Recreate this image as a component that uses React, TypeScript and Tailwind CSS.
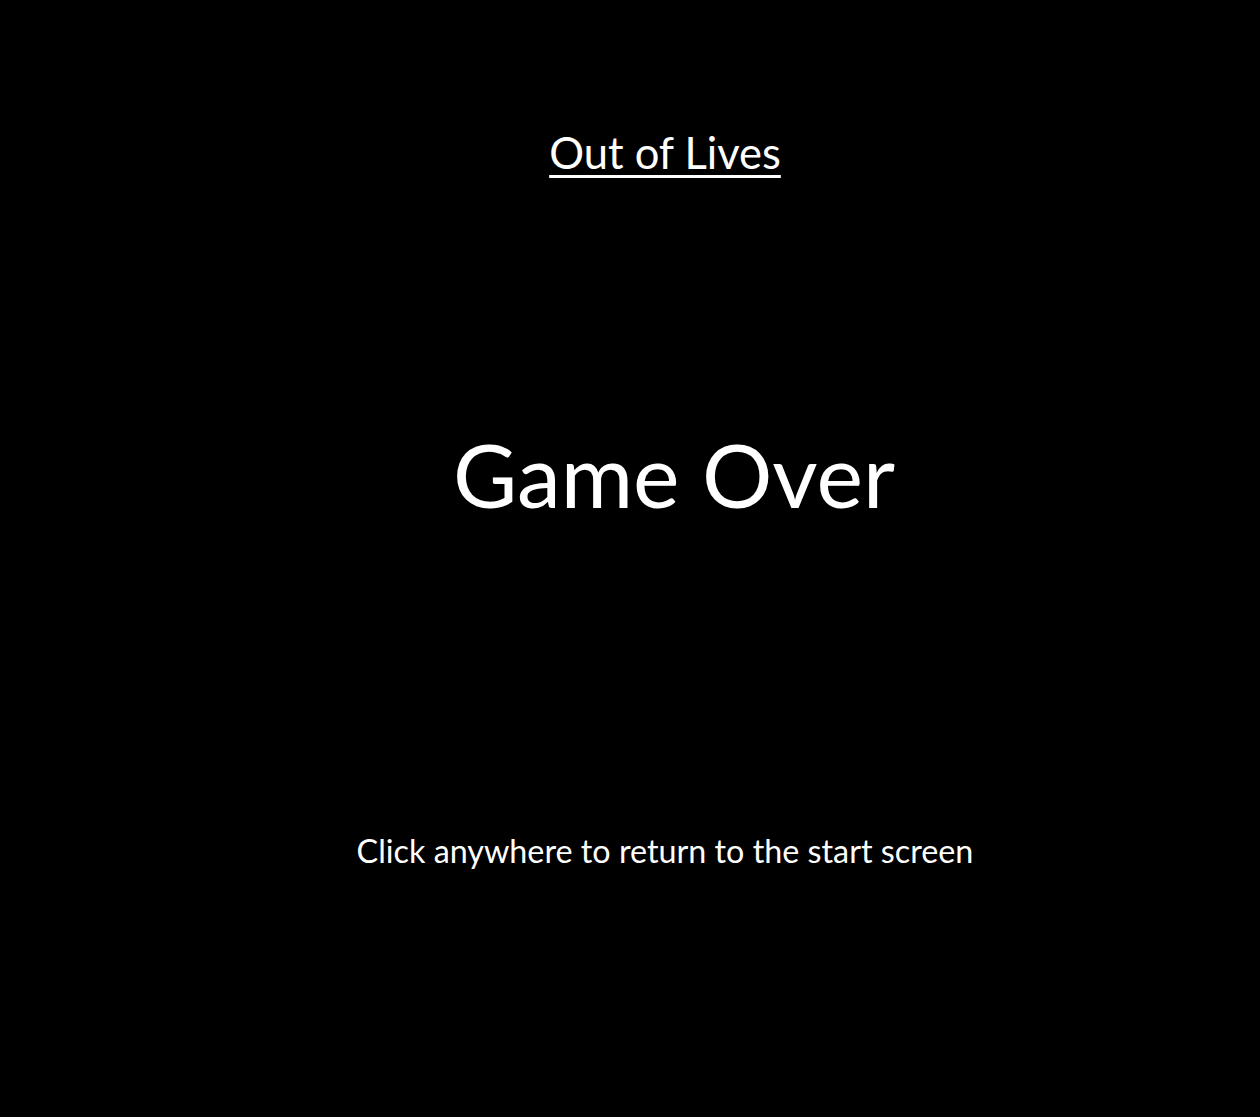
export default function App() {
  return (
    <div
      className="min-h-[1117px] w-full bg-black text-white flex flex-col items-center pl-[70px]"
      style={{ fontFamily: "Lato, 'Open Sans', sans-serif" }}
    >
      <h2 className="mt-[128px] text-[43.5px] leading-[48px] underline underline-offset-[6px] decoration-[3px]">
        Out of Lives
      </h2>
      <h1 className="mt-[248px] text-[88px] leading-[100px] pl-[18px]">Game Over</h1>
      <p className="mt-[307px] text-[32.3px] leading-[40px]">Click anywhere to return to the start screen</p>
    </div>
  )
}
